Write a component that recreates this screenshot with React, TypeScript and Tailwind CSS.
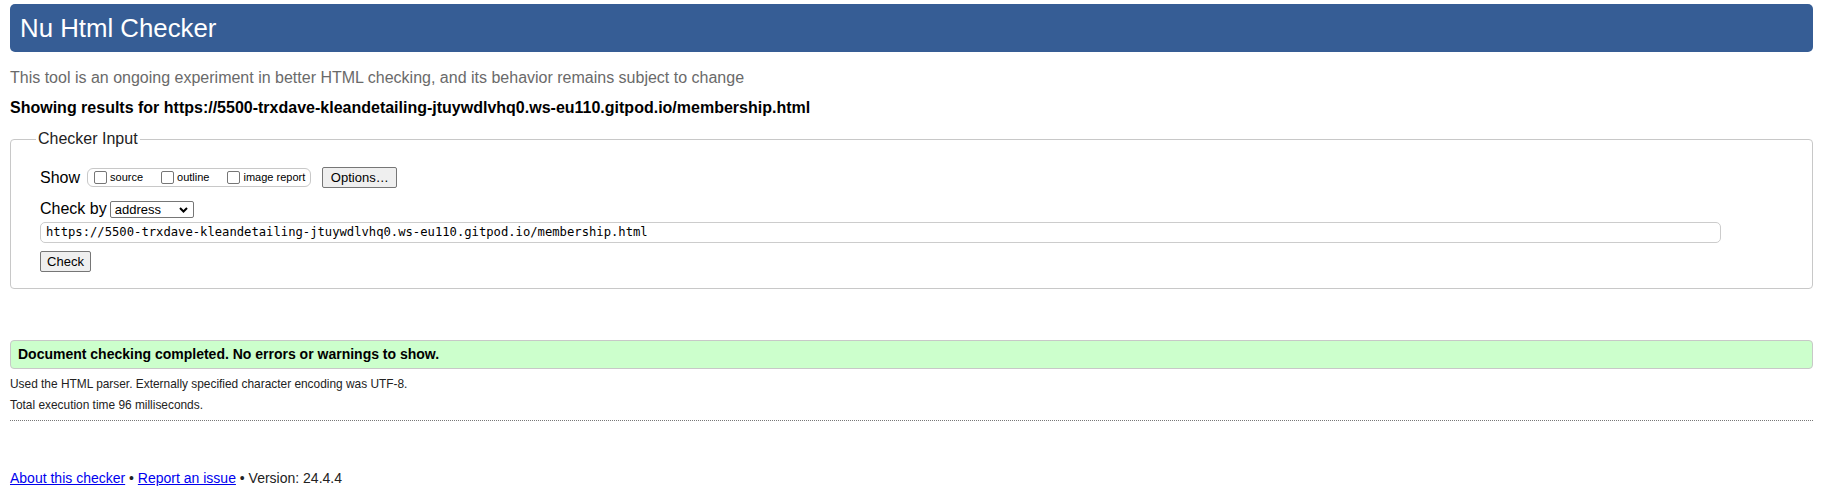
import React from "react";

const pageUrl = "https://5500-trxdave-kleandetailing-jtuywdlvhq0.ws-eu110.gitpod.io/membership.html";

function ShowOption({ label, last }: { label: string; last?: boolean }) {
  return (
    <label className={`flex items-center ${last ? "" : "mr-[18px]"}`}>
      <span className="w-[13px] h-[13px] border border-[#767676] rounded-[2px] bg-white" />
      <span className="ml-[3px] text-[11px] leading-[13px]">{label}</span>
    </label>
  );
}

export default function App() {
  return (
    <div className="px-[10px] pt-[4px] pb-[20px] font-['Liberation_Sans',Arial,sans-serif] text-black bg-white">
      {/* title bar */}
      <h1 className="h-[48px] rounded-[5px] bg-[#365d95] text-white text-[25.8px] pl-[10px] flex items-center">
        Nu Html Checker
      </h1>

      <p className="mt-[16px] text-[16px] leading-[20px] text-[#6a6a6a]">
        This tool is an ongoing experiment in better HTML checking, and its behavior remains subject to change
      </p>
      <p className="mt-[10px] text-[16px] leading-[20px] font-bold">
        Showing results for {pageUrl}
      </p>

      <fieldset className="mt-[12px] border border-[#c8c8c8] rounded-[4px] pl-[29px] pr-[10px] pb-[15px]">
        <legend className="ml-[-4px] px-[2px] text-[16px] leading-[18px] text-[#222]">Checker Input</legend>

        <div className="mt-[19px] flex items-center h-[21px]">
          <span className="text-[16px] leading-[18px]">Show</span>
          <div className="ml-[7px] h-[19px] flex items-center border border-[#c8c8c8] rounded-[6px] pl-[6px] pr-[5px]">
            <ShowOption label="source" />
            <ShowOption label="outline" />
            <ShowOption label="image report" last />
          </div>
          <button className="ml-[11px] w-[75px] h-[21px] border border-[#767676] rounded-[2px] bg-[#efefef] text-[13px] leading-[15px]">
            Options…
          </button>
        </div>

        <div className="mt-[12px] flex items-center h-[18px]">
          <span className="text-[16px] leading-[18px]">Check by</span>
          <div className="relative ml-[3px] w-[84px] h-[17px] border border-[#767676] rounded-[2px] bg-white flex items-center pl-[4px] text-[13px] leading-[15px]">
            address
            <svg className="absolute right-[5px] top-[5px]" width="9" height="6" viewBox="0 0 9 6">
              <path d="M1 1l3.5 3.5L8 1" fill="none" stroke="#000" strokeWidth="2" />
            </svg>
          </div>
        </div>

        <div className="mt-[4px] mr-[81px] h-[21px] border border-[#ccc] rounded-[5px] flex items-center pl-[5px] font-['DejaVu_Sans_Mono','Liberation_Mono',monospace] text-[12.2px] text-black">
          {pageUrl}
        </div>

        <button className="mt-[8px] w-[51px] h-[21px] border border-[#767676] rounded-[2px] bg-[#efefef] text-[13px] leading-[15px]">
          Check
        </button>
      </fieldset>

      <div className="mt-[51px] h-[29px] border border-[#c8c8c8] rounded-[4px] bg-[#ccffcc] flex items-center pl-[7px] text-[14px] font-bold">
        Document checking completed. No errors or warnings to show.
      </div>

      <p className="mt-[7px] text-[11.9px] leading-[16px] text-[#222]">
        Used the HTML parser. Externally specified character encoding was UTF-8.
      </p>
      <p className="mt-[5px] text-[11.9px] leading-[16px] text-[#222]">Total execution time 96 milliseconds.</p>

      <hr className="mt-[7px] border-0 border-t border-dotted border-[#777]" />

      <p className="mt-[49px] text-[14px] leading-[16px] text-[#222]">
        <a href="#" className="text-[#0000ee] underline">About this checker</a>
        {" • "}
        <a href="#" className="text-[#0000ee] underline">Report an issue</a>
        {" • Version: 24.4.4"}
      </p>
    </div>
  );
}
